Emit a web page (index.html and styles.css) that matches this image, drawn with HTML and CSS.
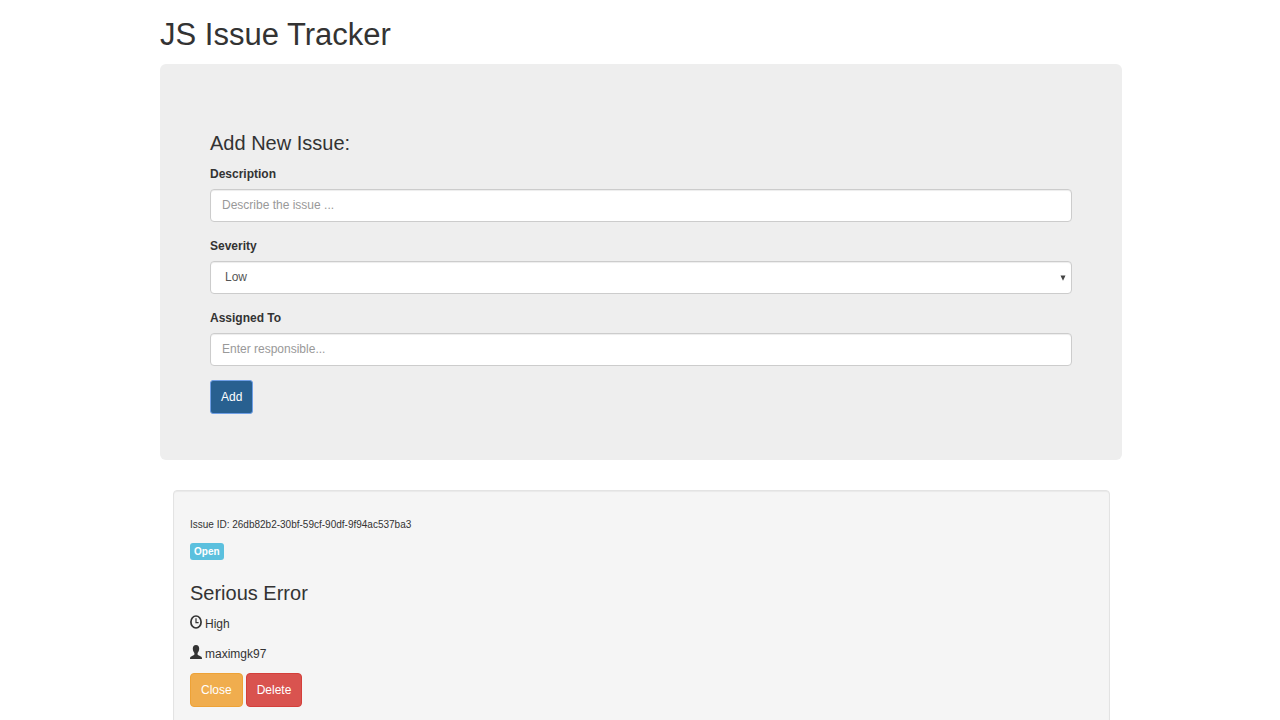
FILE: index.html
```html
<!DOCTYPE html>
<html lang="en">
<head>
<meta charset="utf-8">
<meta name="viewport" content="width=device-width, initial-scale=1">
<title>JS Issue Tracker</title>
<link rel="stylesheet" href="styles.css">
</head>
<body>
<main class="container">
  <h1 class="page-title">JS Issue Tracker</h1>
  <section class="jumbotron">
    <h3 class="heading">Add New Issue:</h3>
    <form class="issue-form">
      <div class="form-group">
        <label for="description">Description</label>
        <input class="form-control" type="text" id="description" placeholder="Describe the issue ...">
      </div>
      <div class="form-group">
        <label for="severity">Severity</label>
        <div class="select-wrap">
          <select class="form-control form-select" id="severity">
            <option>Low</option>
            <option>Medium</option>
            <option>High</option>
          </select>
          <svg class="caret" viewBox="0 0 6 6" aria-hidden="true"><path d="M0.5 0.5H5.5L3 5.8Z"/></svg>
        </div>
      </div>
      <div class="form-group">
        <label for="assigned">Assigned To</label>
        <input class="form-control" type="text" id="assigned" placeholder="Enter responsible...">
      </div>
      <button class="btn btn-primary" type="button">Add</button>
    </form>
  </section>
  <section class="issues">
    <article class="well">
      <h6 class="issue-id">Issue ID: 26db82b2-30bf-59cf-90df-9f94ac537ba3</h6>
      <p class="status"><span class="label-info">Open</span></p>
      <h3 class="heading">Serious Error</h3>
      <p class="meta">
        <svg class="icon" viewBox="0 0 12 14" aria-hidden="true"><ellipse cx="6" cy="7" rx="5.1" ry="6" fill="none" stroke="currentColor" stroke-width="1.7"/><path d="M6 3.2V7.6H8.6" fill="none" stroke="currentColor" stroke-width="1.2"/></svg>
        <span>High</span>
      </p>
      <p class="meta">
        <svg class="icon" viewBox="0 0 12 14" aria-hidden="true"><path d="M6 0C3.8 0 2.8 1.5 2.8 3.6C2.8 5.5 3.4 7 4.4 8V9.2C4.4 9.9 3.8 10.2 3 10.6L1.2 11.4C.4 11.8 0 12.4 0 14H12C12 12.4 11.6 11.8 10.8 11.4L9 10.6C8.2 10.2 7.6 9.9 7.6 9.2V8C8.6 7 9.2 5.5 9.2 3.6C9.2 1.5 8.2 0 6 0Z" fill="currentColor"/></svg>
        <span>maximgk97</span>
      </p>
      <div class="actions">
        <button class="btn btn-warning" type="button">Close</button>
        <button class="btn btn-danger" type="button">Delete</button>
      </div>
    </article>
  </section>
</main>
</body>
</html>
```
FILE: styles.css
```css
* {
  box-sizing: border-box;
}

body {
  margin: 0;
  background: #fff;
  color: #333;
  font: 12px/20px "Liberation Sans", Arial, sans-serif;
}

.container {
  padding: 0 158px 0 160px;
}

.page-title {
  margin: 0;
  padding: 15px 0 9px;
  font-size: 31px;
  font-weight: 400;
  line-height: 40px;
}

.jumbotron {
  padding: 64px 50px 46px;
  border-radius: 6px;
  background: #eee;
}

.heading {
  margin: 0 0 6px;
  font-size: 20px;
  font-weight: 400;
  line-height: 30px;
}

.form-group {
  margin-bottom: 14px;
}

.form-group label {
  display: block;
  margin-bottom: 5px;
  font-weight: 700;
}

.form-control {
  display: block;
  width: 100%;
  height: 33px;
  padding: 4px 11px 5px;
  border: 1px solid #ccc;
  border-radius: 4px;
  background: #fff;
  box-shadow: inset 0 1px 1px rgba(0, 0, 0, 0.075);
  color: #555;
  font: inherit;
}

.form-control::placeholder {
  color: #999;
  opacity: 1;
}

.select-wrap {
  position: relative;
}

.form-select {
  padding-left: 14px;
  appearance: none;
}

.caret {
  position: absolute;
  top: 14px;
  right: 6px;
  width: 6px;
  height: 6px;
  fill: #444;
  pointer-events: none;
}

.btn {
  height: 34px;
  padding: 0 10px;
  border: 1px solid transparent;
  border-radius: 4px;
  color: #fff;
  font: inherit;
}

.btn-primary {
  display: block;
  border-color: #6f9fe6;
  border-radius: 3px;
  background: #286090;
}

.btn-warning {
  border-color: #eea236;
  background: #f0ad4e;
}

.btn-danger {
  border-color: #d43f3a;
  background: #d9534f;
}

.issues {
  padding: 30px 12px 0 13px;
}

.well {
  padding: 24px 16px 30px;
  border: 1px solid #e3e3e3;
  border-radius: 4px;
  background: #f5f5f5;
  box-shadow: inset 0 1px 1px rgba(0, 0, 0, 0.05);
}

.issue-id {
  margin: 0 0 8px;
  font-size: 10px;
  font-weight: 400;
}

.status {
  display: flex;
  margin: 0 0 18px;
}

.label-info {
  padding: 0 4px;
  border-radius: 3px;
  background: #5bc0de;
  color: #fff;
  font-size: 10px;
  font-weight: 700;
  line-height: 17px;
}

.meta {
  display: flex;
  gap: 3px;
  margin: 0 0 10px;
}

.meta:last-of-type {
  margin-bottom: 9px;
}

.icon {
  width: 12px;
  height: 14px;
  margin-top: 1px;
}

.actions {
  display: flex;
  gap: 3px;
}
```
